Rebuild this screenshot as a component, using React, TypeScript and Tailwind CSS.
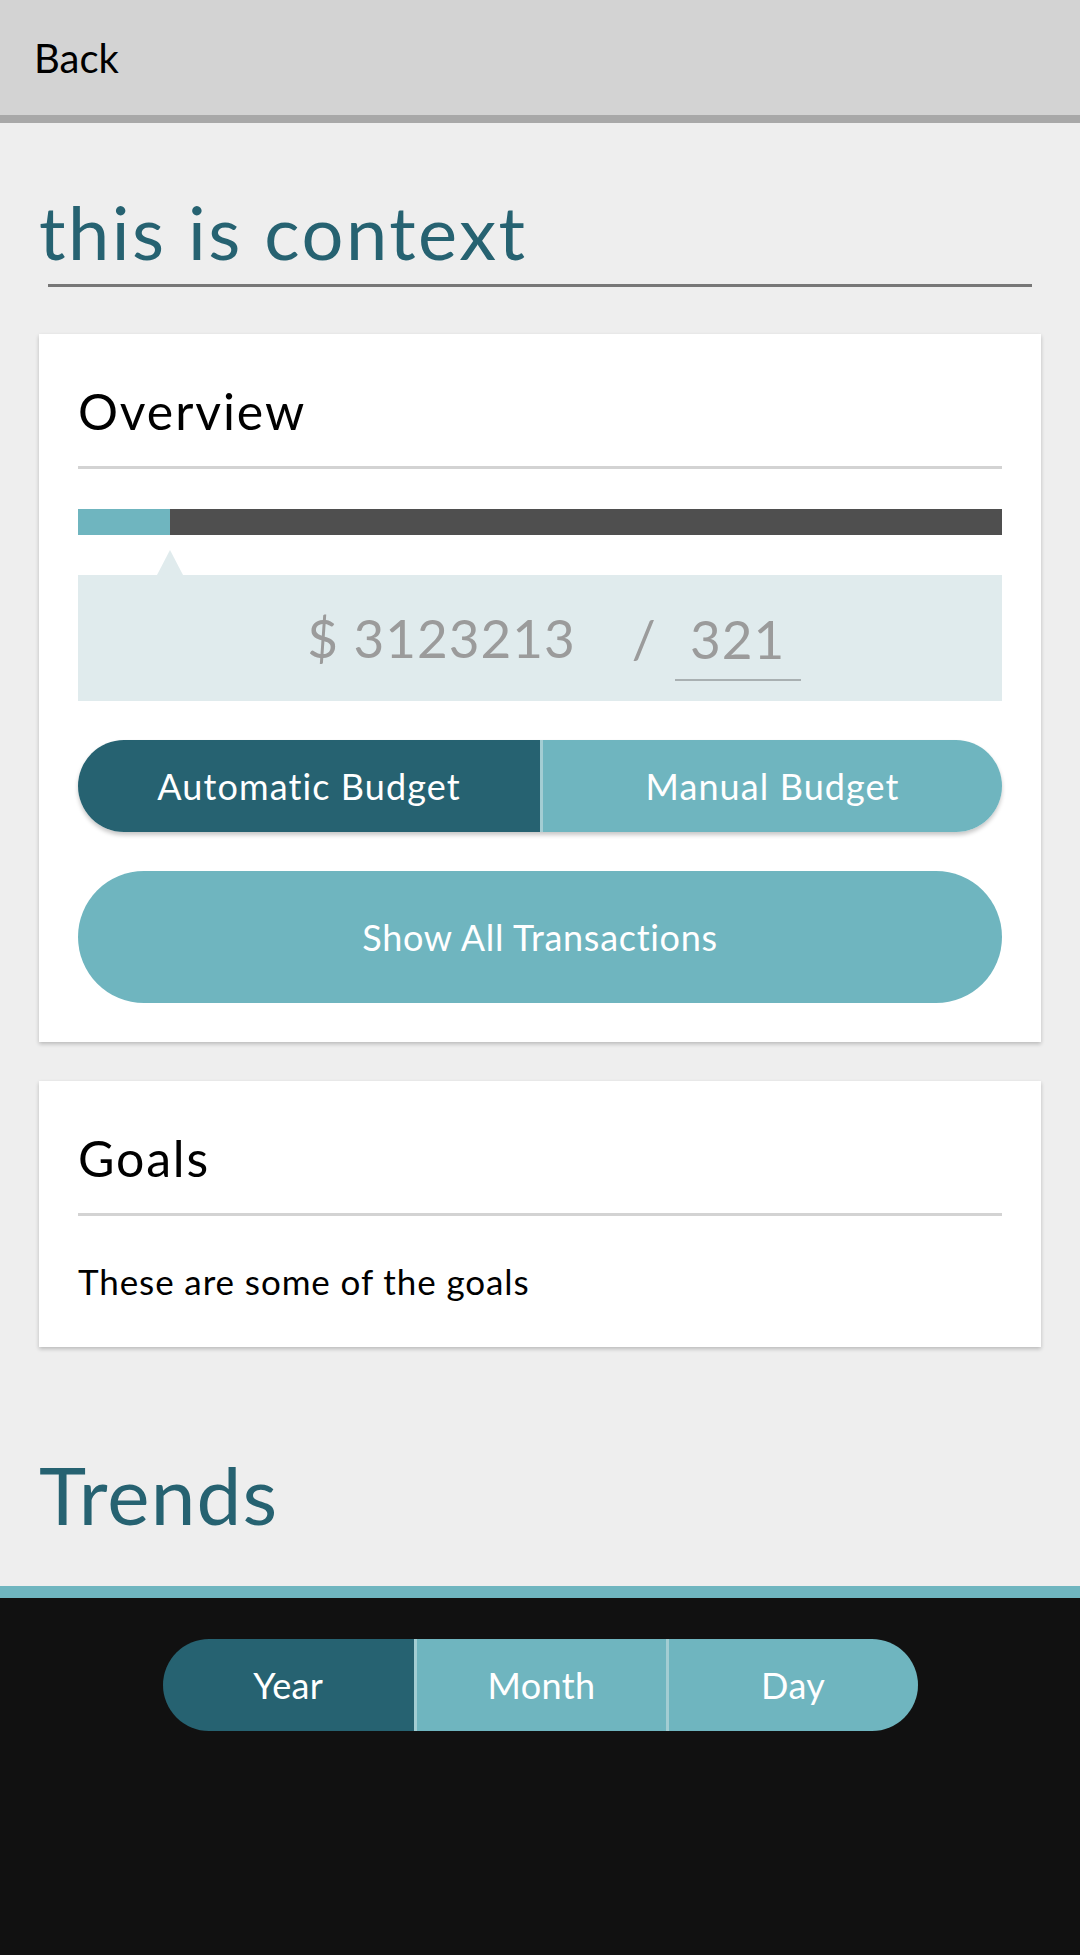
export default function App() {
  return (
    <div
      className="min-h-[1955px] flex flex-col bg-[#eeeeee]"
      style={{ fontFamily: "Lato, 'Open Sans', sans-serif" }}
    >
      {/* top bar */}
      <div className="h-[123px] bg-[#d3d3d3] border-b-8 border-[#a8a8a8] flex items-center px-[34px]">
        <span className="text-[40px] leading-[48px] text-black">Back</span>
      </div>

      <div className="px-[39px]">
        <h1 className="mt-[69px] text-[74px] leading-[80px] tracking-[2.5px] text-[#266271]">this is context</h1>
        <div className="mt-[12px] mx-[9px] h-[3px] bg-[#777777]" />

        {/* overview */}
        <div className="mt-[47px] bg-white shadow-[0_2px_4px_rgba(0,0,0,0.22)] px-[39px] pt-[47px] pb-[39px]">
          <h2 className="text-[50px] leading-[60px] tracking-[1.9px] text-black">Overview</h2>
          <div className="mt-[25px] h-[3px] bg-[#d3d3d3]" />

          <div className="mt-[40px] h-[26px] flex bg-[#4f4f4f]">
            <div className="w-[92px] bg-[#6fb5bf]" />
          </div>

          <div className="relative mt-[40px] h-[126px] bg-[#e0ebed] flex items-center justify-center pl-[28px] text-[#9b9b9b]">
            <div className="absolute left-[79px] -top-[25px] w-0 h-0 border-l-[13px] border-r-[13px] border-b-[25px] border-l-transparent border-r-transparent border-b-[#e0ebed]" />
            <span className="text-[53px] leading-[60px] tracking-[1px]">$ 3123213</span>
            <span className="text-[53px] leading-[60px] ml-[56px]">/</span>
            <div className="ml-[19px] mt-[14px] w-[126px] border-b-2 border-[#a9b0b2] text-center text-[53px] leading-[60px] tracking-[1px] pb-[10px]">
              321
            </div>
          </div>

          <div className="mt-[39px] h-[92px] grid grid-cols-2 rounded-full overflow-hidden shadow-[0_3px_4px_rgba(0,0,0,0.22)] text-[36px] tracking-[1.1px] text-white">
            <div className="bg-[#266271] flex items-center justify-center">Automatic Budget</div>
            <div className="bg-[#6fb5bf] border-l-[3px] border-[#a3cdd3] flex items-center justify-center">
              Manual Budget
            </div>
          </div>

          <div className="mt-[39px] h-[132px] rounded-full bg-[#6fb5bf] flex items-center justify-center text-[36px] tracking-[0.7px] text-white">
            Show All Transactions
          </div>
        </div>

        {/* goals */}
        <div className="mt-[39px] bg-white shadow-[0_2px_4px_rgba(0,0,0,0.22)] px-[39px] pt-[47px] pb-[46px]">
          <h2 className="text-[50px] leading-[60px] tracking-[1.8px] text-black">Goals</h2>
          <div className="mt-[25px] h-[3px] bg-[#d3d3d3]" />
          <p className="mt-[45px] text-[35px] leading-[40px] tracking-[0.9px] text-black">These are some of the goals</p>
        </div>

        <h1 className="mt-[102px] text-[80px] leading-[90px] tracking-[1.2px] text-[#266271]">Trends</h1>
      </div>

      <div className="mt-[47px] h-[12px] bg-[#6fb5bf]" />

      {/* bottom panel */}
      <div className="flex-1 bg-[#111111] pt-[41px] flex justify-center items-start">
        <div className="w-[755px] h-[92px] grid grid-cols-3 rounded-full overflow-hidden text-[36px] tracking-[0.4px] text-white">
          <div className="bg-[#266271] flex items-center justify-center">Year</div>
          <div className="bg-[#6fb5bf] border-l-[3px] border-[#a3cdd3] flex items-center justify-center">Month</div>
          <div className="bg-[#6fb5bf] border-l-[3px] border-[#a3cdd3] flex items-center justify-center">Day</div>
        </div>
      </div>
    </div>
  );
}
